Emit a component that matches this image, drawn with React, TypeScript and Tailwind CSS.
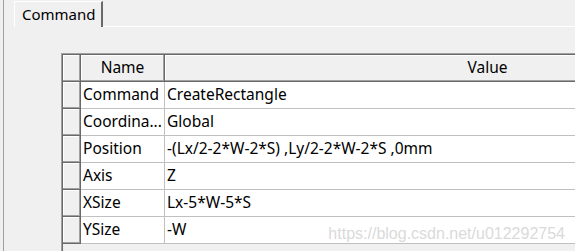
const rows: [string, string][] = [
  ['Command', 'CreateRectangle'],
  ['Coordina...', 'Global'],
  ['Position', '-(Lx/2-2*W-2*S) ,Ly/2-2*W-2*S ,0mm'],
  ['Axis', 'Z'],
  ['XSize', 'Lx-5*W-5*S'],
  ['YSize', '-W'],
]

const raised =
  'shrink-0 bg-[#f0f0f0] border-r border-b border-[#696969] shadow-[inset_-1px_-1px_0_#a0a0a0,inset_1px_1px_0_#ffffff]'

export default function App() {
  return (
    <div
      className="relative h-[251px] w-[575px] overflow-hidden bg-[#f0f0f0] text-[15px] text-black"
      style={{ fontFamily: '"Noto Sans", "Open Sans", sans-serif' }}
    >
      <div className="ml-[3px] h-full border-l border-[#a0a0a0]">
        {/* tab strip */}
        <div className="flex h-[27px] pt-px">
          <div className="ml-[10px] flex h-[26px] w-[89px] shrink-0 items-center border-l border-t border-white border-r-2 border-r-[#696969] pl-[7px] leading-none">
            Command
          </div>
          <div className="flex-1 border-b border-white" />
        </div>

        {/* property grid */}
        <div className="ml-[57px] mt-[26px] h-full w-[800px] border-l border-t border-[#a0a0a0] text-[15.5px]">
          <div className="h-full border-l border-t border-[#696969]">
            <div className="flex h-[27px]">
              <div className={`w-[18px] ${raised}`} />
              <div className={`flex w-[84px] items-center justify-center ${raised}`}>Name</div>
              <div className={`flex w-[646px] items-center justify-center ${raised}`}>Value</div>
            </div>
            {rows.map(([name, value]) => (
              <div key={name} className="flex h-[27px]">
                <div className={`w-[18px] ${raised}`} />
                <div className="flex w-[84px] shrink-0 items-center overflow-hidden border-r border-b border-[#c0c0c0] bg-white pl-[2px] whitespace-nowrap">
                  {name}
                </div>
                <div className="flex w-[646px] shrink-0 items-center border-b border-[#c0c0c0] bg-white pl-[2px] whitespace-nowrap">
                  {value}
                </div>
              </div>
            ))}
          </div>
        </div>
      </div>

      <div
        className="absolute right-[10px] top-[222px] text-[16px] text-[#dadada]"
        style={{ fontFamily: '"Liberation Sans", Arial, sans-serif' }}
      >
        https://blog.csdn.net/u012292754
      </div>
    </div>
  )
}
